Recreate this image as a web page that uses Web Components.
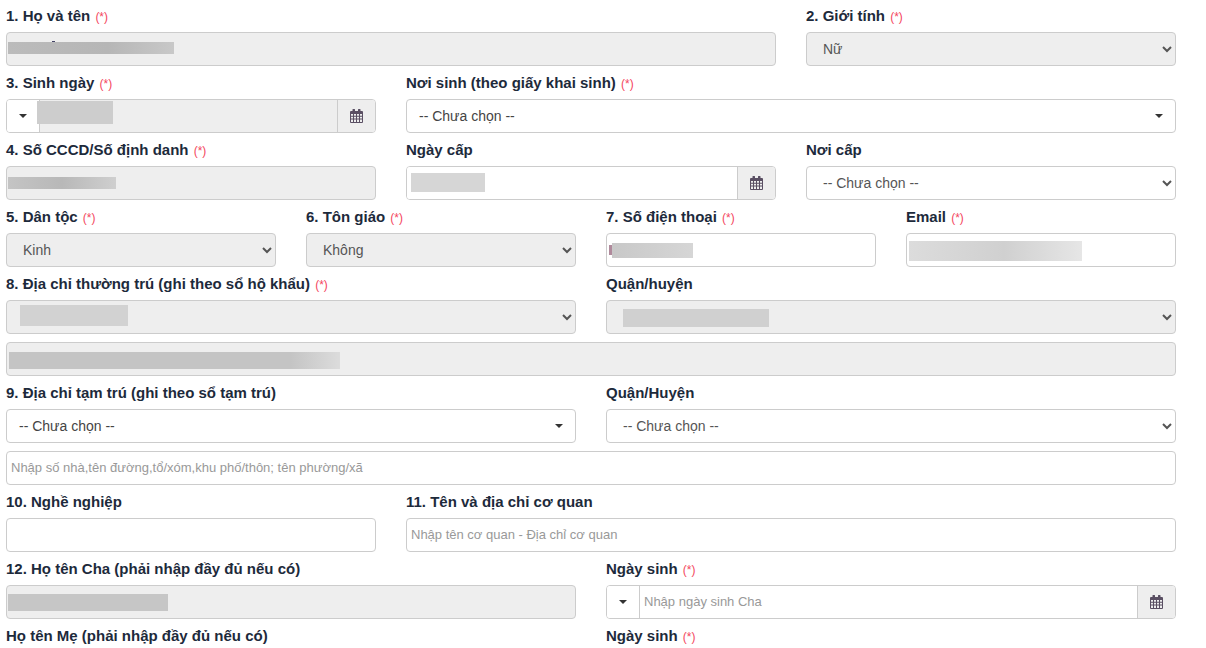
<!doctype html>
<html lang="vi">
<head>
<meta charset="utf-8">
<title>Form</title>
<style>
  html, body { margin: 0; background: #fff; }
  body { font: 14px "Liberation Sans", Arial, sans-serif; color: #555; overflow: hidden; height: 648px; }
</style>
</head>
<body>
<template id="tmpl-field">
  <style>
    :host { display: block; min-width: 0; margin-bottom: 8px; grid-column: span var(--span, 4); }
    label { display: block; height: 18px; line-height: 18px; margin-bottom: 7px; font-weight: bold; font-size: 15px; color: #1d2a3b; white-space: nowrap; }
    label[hidden] { display: none; }
    .req { font-weight: normal; font-size: 12px; color: #f4465e; margin-left: 1px; }
    .req[hidden] { display: none; }
  </style>
  <label part="label"><span id="text"></span> <span class="req" id="req">(*)</span></label>
  <slot></slot>
</template>

<template id="tmpl-text">
  <style>
    :host { display: block; position: relative; height: 34px; }
    input { box-sizing: border-box; display: block; width: 100%; height: 34px; padding: 4px 4px 6px; border: 1px solid #ccc; border-radius: 4px;
      font: 13px "Liberation Sans", Arial, sans-serif; color: #555; background: #fff; outline: none; }
    input::placeholder { color: #999; opacity: 1; }
    input:disabled { background: #eee; }
  </style>
  <input type="text"><slot></slot>
</template>

<template id="tmpl-select">
  <style>
    :host { display: block; position: relative; height: 34px; }
    select { box-sizing: border-box; display: block; width: 100%; height: 34px; padding: 6px 12px; border: 1px solid #ccc; border-radius: 4px;
      font: 14px "Liberation Sans", Arial, sans-serif; color: #555; background-color: #fff; outline: none; }
    select:disabled { background-color: #eee; color: #555; opacity: 1; }
  </style>
  <select></select><slot></slot>
</template>

<template id="tmpl-combo">
  <style>
    :host { display: flex; align-items: center; justify-content: space-between; box-sizing: border-box; height: 34px; padding: 0 12px;
      border: 1px solid #ccc; border-radius: 4px; background: #fff; color: #444; font-size: 14px; }
    i { width: 0; height: 0; border: 4px solid transparent; border-top-color: #333; border-bottom: 0; }
  </style>
  <span><slot></slot></span><i></i>
</template>

<template id="tmpl-date">
  <style>
    :host { display: flex; position: relative; box-sizing: border-box; height: 34px; border: 1px solid #ccc; border-radius: 4px; background: #fff; overflow: hidden; }
    .drop { flex: 0 0 33px; display: flex; align-items: center; justify-content: center; background: #fff; border-right: 1px solid #ccc; box-sizing: border-box; }
    .drop[hidden] { display: none; }
    .drop i { width: 0; height: 0; border: 4px solid transparent; border-top-color: #333; border-bottom: 0; }
    input { flex: 1; min-width: 0; border: 0; padding: 0 4px 2px; font: 13px "Liberation Sans", Arial, sans-serif; color: #555; background: #fff; outline: none; }
    input::placeholder { color: #999; opacity: 1; }
    input:disabled { background: #eee; }
    .cal { flex: 0 0 38px; box-sizing: border-box; display: flex; align-items: center; justify-content: center; background: #eee; border-left: 1px solid #ccc; }
    svg { display: block; }
  </style>
  <div class="drop"><i></i></div>
  <input type="text">
  <div class="cal"><svg width="13" height="14" viewBox="0 0 13 14"><path fill="#5a4f63" fill-rule="evenodd" d="M3 0h1.500a.5.5 0 0 1 .5.5V2h3V.5a.5.5 0 0 1 .5-.5H10a.5.5 0 0 1 .5.5V2H12a1 1 0 0 1 1 1v10a1 1 0 0 1-1 1H1a1 1 0 0 1-1-1V3a1 1 0 0 1 1-1h1.500V.5A.5.5 0 0 1 3 0zM1 5v1.700h2V5zm3 0v1.700h2V5zm3 0v1.700h2V5zm3 0v1.700h2V5zM1 7.700v1.800h2V7.700zm3 0v1.800h2V7.700zm3 0v1.800h2V7.700zm3 0v1.800h2V7.700zM1 10.500V13h2v-2.500zm3 0V13h2v-2.500zm3 0V13h2v-2.500zm3 0V13h2v-2.500z"/></svg></div>
  <slot></slot>
</template>

<template id="tmpl-blur">
  <style>
    :host { display: block; position: absolute; left: var(--x); top: var(--y); width: var(--w); height: var(--h); background: var(--bg, #c9c9c9); }
  </style>
</template>

<form-rows>
  <form-field label="1. Họ và tên" req style="--span:8"><text-box disabled><blur-box style="--x:2px;--y:10px;--w:166px;--h:12px;--bg:linear-gradient(90deg,#bbb,#b6b6b6 60%,#c8c8c8)"></blur-box><blur-box style="--x:46px;--y:9px;--w:3px;--h:1px;--bg:#446"></blur-box></text-box></form-field>
  <form-field label="2. Giới tính" req style="--span:4"><select-box disabled value="Nữ"></select-box></form-field>

  <form-field label="3. Sinh ngày" req style="--span:4"><date-box disabled><blur-box style="--x:30px;--y:1px;--w:76px;--h:23px;--bg:#cdcdcd"></blur-box></date-box></form-field>
  <form-field label="Nơi sinh (theo giấy khai sinh)" req style="--span:8"><combo-box>-- Chưa chọn --</combo-box></form-field>

  <form-field label="4. Số CCCD/Số định danh" req style="--span:4"><text-box disabled><blur-box style="--x:2px;--y:11px;--w:108px;--h:12px;--bg:linear-gradient(90deg,#c4c4c4,#b8b8b8 50%,#cfcfcf)"></blur-box></text-box></form-field>
  <form-field label="Ngày cấp" style="--span:4"><date-box nodrop><blur-box style="--x:4px;--y:6px;--w:74px;--h:19px;--bg:#d6d6d6"></blur-box></date-box></form-field>
  <form-field label="Nơi cấp" style="--span:4"><select-box value="-- Chưa chọn --"></select-box></form-field>

  <form-field label="5. Dân tộc" req style="--span:3"><select-box disabled value="Kinh"></select-box></form-field>
  <form-field label="6. Tôn giáo" req style="--span:3"><select-box disabled value="Không"></select-box></form-field>
  <form-field label="7. Số điện thoại" req style="--span:3"><text-box><blur-box style="--x:3px;--y:12px;--w:3px;--h:10px;--bg:#b08a9c"></blur-box><blur-box style="--x:6px;--y:10px;--w:81px;--h:15px;--bg:linear-gradient(90deg,#c8c8c8,#d6d6d6)"></blur-box></text-box></form-field>
  <form-field label="Email" req style="--span:3"><text-box><blur-box style="--x:3px;--y:8px;--w:173px;--h:20px;--bg:linear-gradient(90deg,#dcdcdc,#d0d0d0 55%,#e6e6e6)"></blur-box></text-box></form-field>

  <form-field label="8. Địa chỉ thường trú (ghi theo sổ hộ khẩu)" req style="--span:6"><select-box disabled><blur-box style="--x:14px;--y:5px;--w:108px;--h:21px;--bg:#d2d2d2"></blur-box></select-box></form-field>
  <form-field label="Quận/huyện" style="--span:6"><select-box disabled><blur-box style="--x:17px;--y:9px;--w:146px;--h:18px;--bg:#d0d0d0"></blur-box></select-box></form-field>
  <form-field style="--span:12" bare><text-box disabled><blur-box style="--x:3px;--y:10px;--w:331px;--h:17px;--bg:linear-gradient(90deg,#c4c4c4,#c4c4c4 85%,#dcdcdc)"></blur-box></text-box></form-field>

  <form-field label="9. Địa chỉ tạm trú (ghi theo sổ tạm trú)" style="--span:6"><combo-box>-- Chưa chọn --</combo-box></form-field>
  <form-field label="Quận/Huyện" style="--span:6"><select-box value="-- Chưa chọn --"></select-box></form-field>
  <form-field style="--span:12" bare><text-box placeholder="Nhập số nhà,tên đường,tổ/xóm,khu phố/thôn; tên phường/xã"></text-box></form-field>

  <form-field label="10. Nghề nghiệp" style="--span:4"><text-box></text-box></form-field>
  <form-field label="11. Tên và địa chỉ cơ quan" style="--span:8"><text-box placeholder="Nhập tên cơ quan - Địa chỉ cơ quan"></text-box></form-field>

  <form-field label="12. Họ tên Cha (phải nhập đầy đủ nếu có)" style="--span:6"><text-box disabled><blur-box style="--x:2px;--y:9px;--w:160px;--h:17px;--bg:#c6c6c6"></blur-box></text-box></form-field>
  <form-field label="Ngày sinh" req style="--span:6"><date-box placeholder="Nhập ngày sinh Cha"></date-box></form-field>

  <form-field label="Họ tên Mẹ (phải nhập đầy đủ nếu có)" style="--span:6"></form-field>
  <form-field label="Ngày sinh" req style="--span:6"></form-field>
</form-rows>

<script>
// copies the template into an open shadow root
function shadowFrom(el, id) {
  el.attachShadow({ mode: "open" });
  el.shadowRoot.appendChild(document.getElementById(id).content.cloneNode(true));
  return el.shadowRoot;
}

class FormRows extends HTMLElement {
  constructor() {
    super();
    this.attachShadow({ mode: "open" }).innerHTML = `
      <style>
        :host { display: grid; grid-template-columns: repeat(12, 70px); column-gap: 30px; padding: 7px 0 0 6px; }
      </style>
      <slot></slot>`;
  }
}

class FormField extends HTMLElement {
  constructor() {
    super();
    const root = shadowFrom(this, "tmpl-field");
    root.getElementById("text").textContent = this.getAttribute("label") || "";
    if (!this.hasAttribute("req")) root.getElementById("req").hidden = true;
    if (this.hasAttribute("bare")) root.querySelector("label").hidden = true;
  }
}

class TextBox extends HTMLElement {
  constructor() {
    super();
    const input = shadowFrom(this, "tmpl-text").querySelector("input");
    input.disabled = this.hasAttribute("disabled");
    input.placeholder = this.getAttribute("placeholder") || "";
  }
}

class SelectBox extends HTMLElement {
  constructor() {
    super();
    const sel = shadowFrom(this, "tmpl-select").querySelector("select");
    sel.disabled = this.hasAttribute("disabled");
    sel.add(new Option(this.getAttribute("value") || ""));
  }
}

class ComboBox extends HTMLElement {
  constructor() {
    super();
    shadowFrom(this, "tmpl-combo");
  }
}

class DateBox extends HTMLElement {
  constructor() {
    super();
    const root = shadowFrom(this, "tmpl-date");
    const input = root.querySelector("input");
    input.disabled = this.hasAttribute("disabled");
    input.placeholder = this.getAttribute("placeholder") || "";
    if (this.hasAttribute("nodrop")) root.querySelector(".drop").hidden = true;
  }
}

class BlurBox extends HTMLElement {
  constructor() {
    super();
    shadowFrom(this, "tmpl-blur");
  }
}

customElements.define("form-rows", FormRows);
customElements.define("form-field", FormField);
customElements.define("text-box", TextBox);
customElements.define("select-box", SelectBox);
customElements.define("combo-box", ComboBox);
customElements.define("date-box", DateBox);
customElements.define("blur-box", BlurBox);
</script>
</body>
</html>
